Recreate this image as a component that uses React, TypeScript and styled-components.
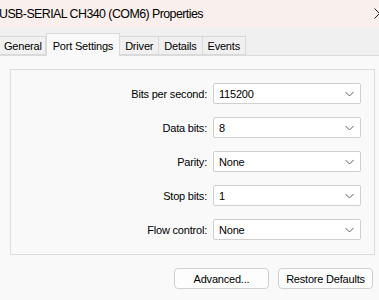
import React from 'react';
import styled, { createGlobalStyle } from 'styled-components';

const GlobalStyle = createGlobalStyle`
  html, body {
    margin: 0;
    padding: 0;
    background: #f9f9f9;
  }
  body {
    font-family: 'Liberation Sans', Arial, sans-serif;
    color: #000;
  }
`;

const Window = styled.div`
  width: 379px;
  height: 300px;
  overflow: hidden;
  display: flex;
  flex-direction: column;
  background: #f9f9f9;
`;

const TitleBar = styled.div`
  height: 27px;
  flex: none;
  background: #f9efed;
  display: flex;
  align-items: center;
  justify-content: space-between;
  font-size: 12.4px;
  letter-spacing: -0.55px;
  padding-top: 1px;
  box-sizing: border-box;
`;

const TitleText = styled.span`
  margin-left: -1px;
  white-space: nowrap;
`;

const CloseIcon = styled.svg`
  flex: none;
  margin-right: -6px;
  margin-top: -2px;
`;

const TabStrip = styled.div`
  height: 29px;
  flex: none;
  background: #f0f0f0;
  display: flex;
  align-items: flex-end;
  box-sizing: border-box;
  border-bottom: 1px solid #dadada;
`;

const Tab = styled.div<{ $active?: boolean }>`
  box-sizing: border-box;
  height: ${(p) => (p.$active ? '23px' : '19px')};
  margin-bottom: ${(p) => (p.$active ? '-1px' : '0')};
  padding: ${(p) => (p.$active ? '2px 6px 0' : '1px 5px 0')};
  background: ${(p) => (p.$active ? '#f9f9f9' : '#f0f0f0')};
  border: 1px solid #d9d9d9;
  border-bottom: ${(p) => (p.$active ? 'none' : '1px solid #d9d9d9')};
  border-left: ${(p) => (p.$active ? '1px solid #d9d9d9' : 'none')};
  font-size: 11px;
  letter-spacing: -0.2px;
  display: flex;
  align-items: center;
  white-space: nowrap;
  &:first-child {
    margin-left: -1px;
    padding-left: 4px;
    padding-right: 3px;
    border-left: 1px solid #d9d9d9;
  }
`;

const Content = styled.div`
  flex: 1;
  padding: 13px 4px 0 10px;
  display: flex;
  flex-direction: column;
`;

const Group = styled.div`
  height: 186px;
  box-sizing: border-box;
  border: 1px solid #dcdcdc;
  padding: 13px 13px 0 0;
  display: flex;
  flex-direction: column;
  gap: 13px;
`;

const Row = styled.div`
  display: grid;
  grid-template-columns: 1fr 148px;
  column-gap: 6px;
  align-items: center;
  height: 21px;
`;

const Label = styled.label`
  text-align: right;
  font-size: 11px;
  letter-spacing: -0.2px;
  white-space: nowrap;
`;

const Select = styled.div`
  box-sizing: border-box;
  height: 21px;
  background: #fff;
  border: 1px solid #cfcfcf;
  border-radius: 2px;
  display: flex;
  align-items: center;
  justify-content: space-between;
  padding: 0 6px 0 5px;
  font-size: 11px;
  letter-spacing: -0.2px;
`;

const Buttons = styled.div`
  display: flex;
  justify-content: flex-end;
  gap: 9px;
  margin-top: 13px;
  padding-right: 2px;
`;

const Button = styled.button`
  box-sizing: border-box;
  width: 95px;
  height: 21px;
  background: #fdfdfd;
  border: 1px solid #d0d0d0;
  border-radius: 4px;
  font-family: 'Liberation Sans', Arial, sans-serif;
  font-size: 11px;
  letter-spacing: -0.2px;
  color: #000;
  padding: 0;
`;

const Chevron = () => (
  <svg width="9" height="6" viewBox="0 0 9 6">
    <path d="M0.5 1 L4.5 5 L8.5 1" fill="none" stroke="#606060" strokeWidth="1" />
  </svg>
);

const fields = [
  { label: 'Bits per second:', value: '115200' },
  { label: 'Data bits:', value: '8' },
  { label: 'Parity:', value: 'None' },
  { label: 'Stop bits:', value: '1' },
  { label: 'Flow control:', value: 'None' },
];

const tabs = ['General', 'Port Settings', 'Driver', 'Details', 'Events'];

export default function App() {
  return (
    <>
      <GlobalStyle />
      <Window>
        <TitleBar>
          <TitleText>USB-SERIAL CH340 (COM6) Properties</TitleText>
          <CloseIcon width="11" height="11" viewBox="0 0 11 11">
            <path d="M0.5 0.5 L10.5 10.5 M10.5 0.5 L0.5 10.5" stroke="#1a1a1a" strokeWidth="1" />
          </CloseIcon>
        </TitleBar>
        <TabStrip>
          {tabs.map((t) => (
            <Tab key={t} $active={t === 'Port Settings'}>
              {t}
            </Tab>
          ))}
        </TabStrip>
        <Content>
          <Group>
            {fields.map((f) => (
              <Row key={f.label}>
                <Label>{f.label}</Label>
                <Select>
                  <span>{f.value}</span>
                  <Chevron />
                </Select>
              </Row>
            ))}
          </Group>
          <Buttons>
            <Button>Advanced...</Button>
            <Button>Restore Defaults</Button>
          </Buttons>
        </Content>
      </Window>
    </>
  );
}
